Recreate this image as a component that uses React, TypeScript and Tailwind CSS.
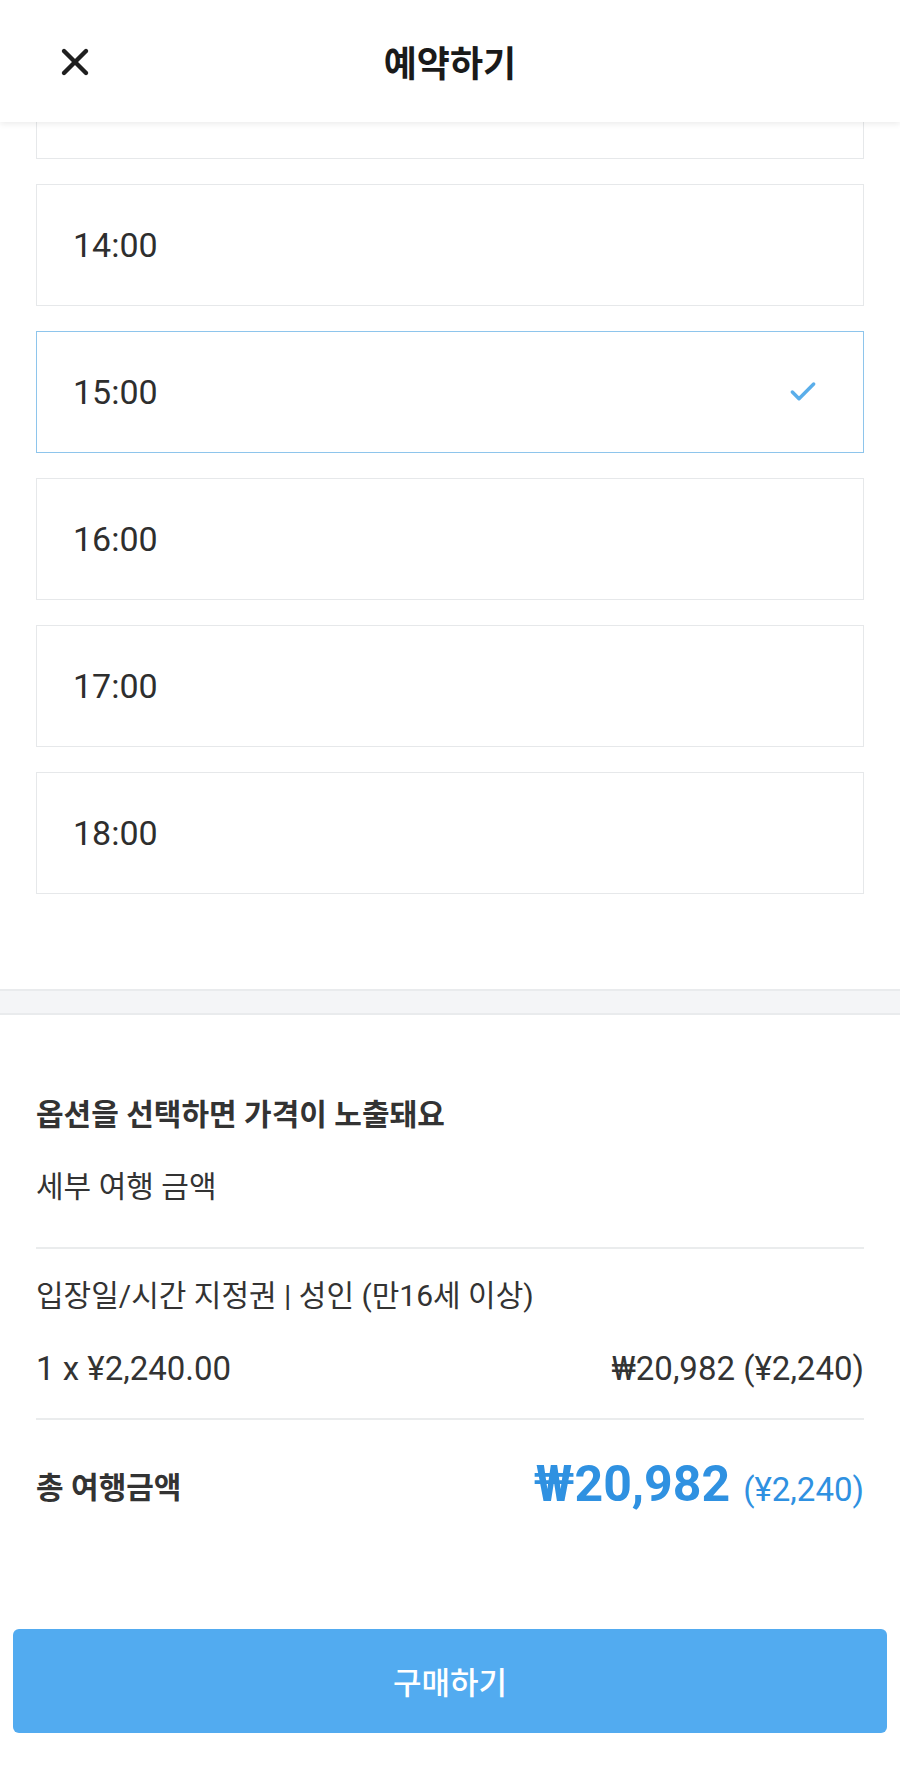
import { X, Check } from "lucide-react";

const times = ["14:00", "15:00", "16:00", "17:00", "18:00"];

export default function App() {
  const selected = "15:00";

  return (
    <div className="w-[900px] min-h-[1767px] bg-white text-[#333] font-['Roboto','Noto_Sans_CJK_KR',sans-serif]">
      {/* 헤더 */}
      <header className="relative z-10 h-[122px] flex items-center justify-center bg-white shadow-[0_2px_6px_rgba(0,0,0,0.08)]">
        <button className="absolute left-[53px] top-[40px] text-[#1f1f1f]">
          <X size={44} strokeWidth={2.4} />
        </button>
        <h1 className="text-[36px] font-bold text-[#1a1a1a] font-['Noto_Sans_CJK_KR',sans-serif]">예약하기</h1>
      </header>

      {/* 시간 선택 */}
      <div className="px-[36px] pb-[95px] flex flex-col gap-[25px]">
        <div className="h-[37px] border border-t-0 border-[#e6e8ea]" />
        {times.map((t) => {
          const active = t === selected;
          return (
            <div
              key={t}
              className={`h-[122px] flex items-center justify-between pl-[36px] pr-[44px] border ${
                active ? "border-[#8ec5ec]" : "border-[#e6e8ea]"
              }`}
            >
              <span className="text-[34px] text-[#2e2e2e]">{t}</span>
              {active && <Check size={32} strokeWidth={2.6} className="text-[#5aaeea]" />}
            </div>
          );
        })}
      </div>

      <div className="h-[26px] bg-[#f4f5f7] border-y-2 border-[#e9ebed]" />

      {/* 가격 */}
      <section className="px-[36px] pt-[80px]">
        <p className="text-[30px] font-bold leading-[40px] text-[#333]">옵션을 선택하면 가격이 노출돼요</p>
        <p className="mt-[32px] text-[30px] leading-[40px] text-[#333]">세부 여행 금액</p>
        <div className="mt-[40px] h-[2px] bg-[#eaeced]" />

        <p className="mt-[27px] text-[30px] leading-[40px] text-[#333]">입장일/시간 지정권 | 성인 (만16세 이상)</p>
        <div className="mt-[33px] flex justify-between text-[33px] leading-[40px] text-[#333]">
          <span>1 x ¥2,240.00</span>
          <span>₩20,982 (¥2,240)</span>
        </div>
        <div className="mt-[29px] h-[2px] bg-[#eaeced]" />

        <div className="mt-[37px] h-[60px] flex items-center justify-between">
          <span className="text-[30px] font-bold text-[#333]">총 여행금액</span>
          <div className="flex items-baseline gap-[13px] text-[#2f91e1] leading-[60px]">
            <span className="text-[50px] font-bold">₩20,982</span>
            <span className="text-[33px]">(¥2,240)</span>
          </div>
        </div>
      </section>

      {/* 구매 버튼 */}
      <div className="px-[13px] pt-[112px] pb-[35px]">
        <button className="w-full h-[104px] rounded-[6px] bg-[#52abf0] text-white text-[31px] font-medium font-['Noto_Sans_CJK_KR',sans-serif]">
          구매하기
        </button>
      </div>
    </div>
  );
}
